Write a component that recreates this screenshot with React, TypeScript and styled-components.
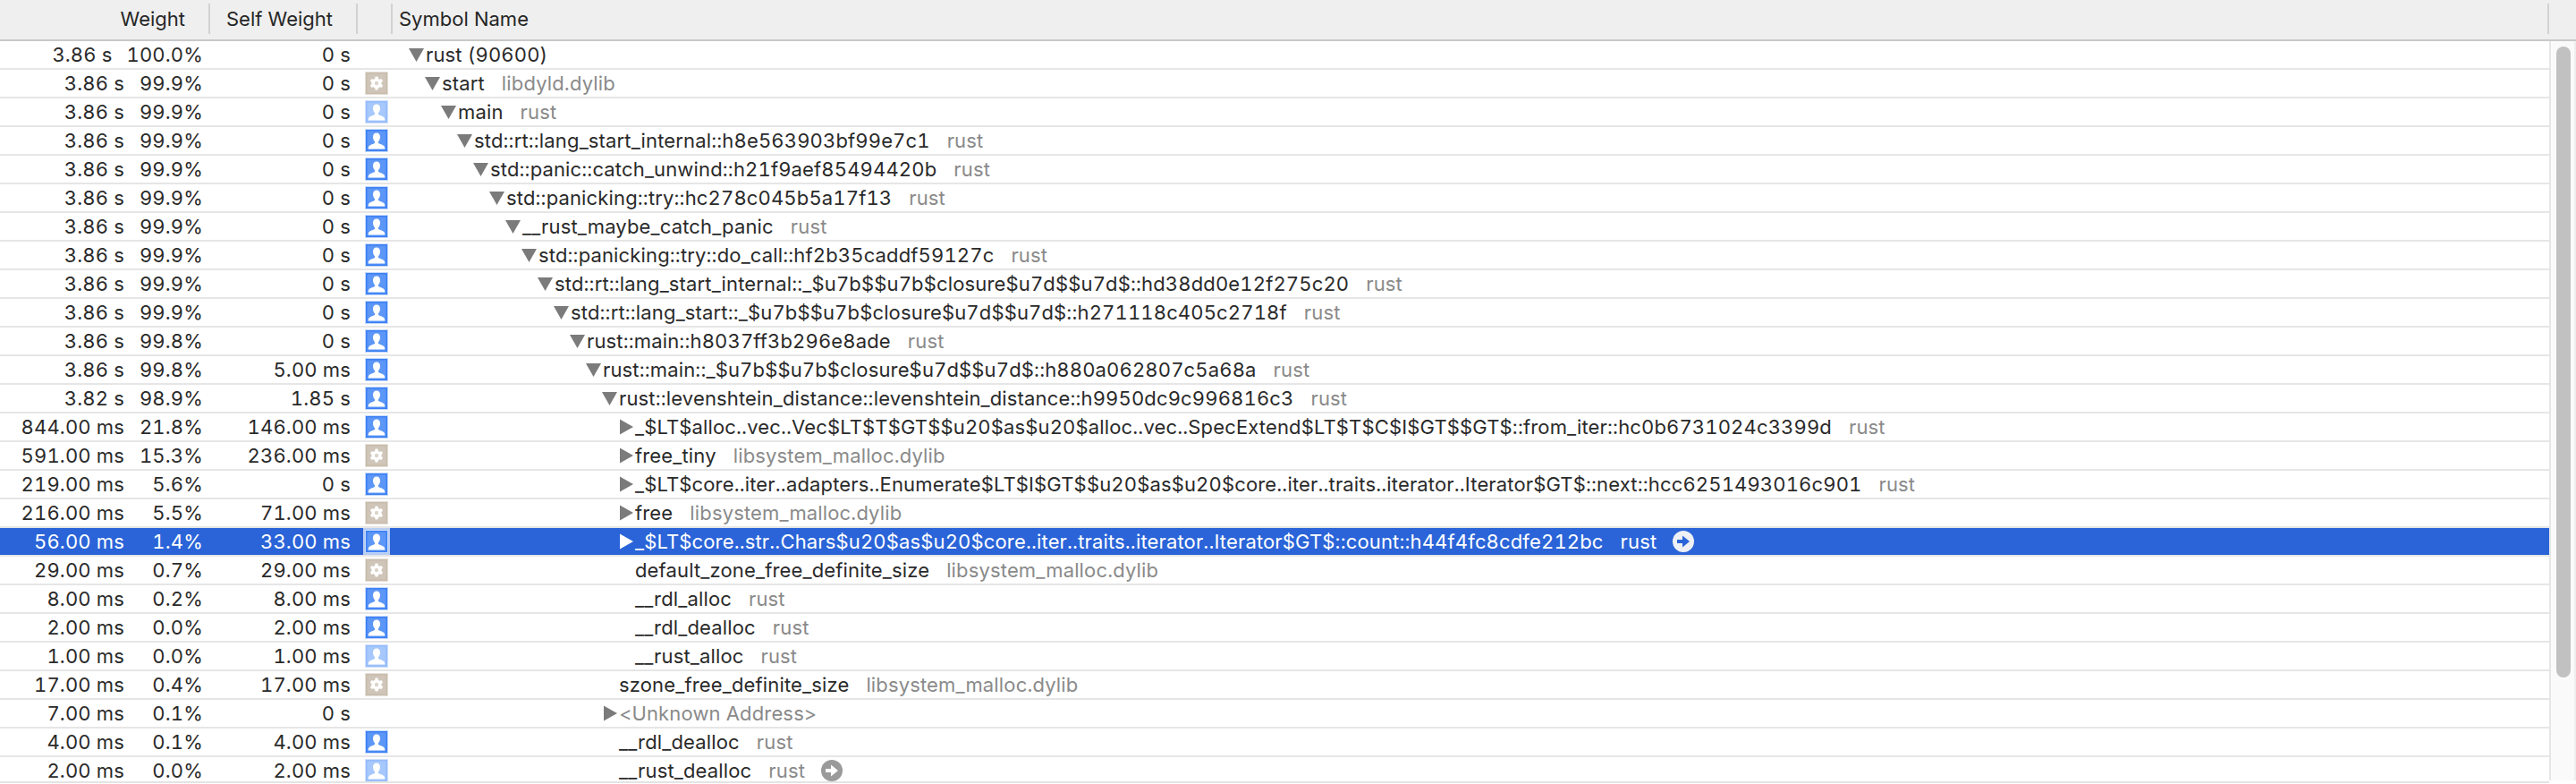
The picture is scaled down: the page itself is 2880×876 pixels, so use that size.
import React from 'react';
import styled, { createGlobalStyle } from 'styled-components';

type IconKind = 'user' | 'dim' | 'gear' | 'none';
type Arrow = 'down' | 'right' | 'none';

interface Sample {
  time: string;
  percent: string;
  self: string;
  icon: IconKind;
  depth: number;
  arrow: Arrow;
  name: string;
  lib?: string;
  selected?: boolean;
  jump?: boolean;
  unknown?: boolean;
}

const samples: Sample[] = [
  { time: '3.86 s', percent: '100.0%', self: '0 s', icon: 'none', depth: 0, arrow: 'down', name: 'rust (90600)' },
  { time: '3.86 s', percent: '99.9%', self: '0 s', icon: 'gear', depth: 1, arrow: 'down', name: 'start', lib: 'libdyld.dylib' },
  { time: '3.86 s', percent: '99.9%', self: '0 s', icon: 'dim', depth: 2, arrow: 'down', name: 'main', lib: 'rust' },
  { time: '3.86 s', percent: '99.9%', self: '0 s', icon: 'user', depth: 3, arrow: 'down', name: 'std::rt::lang_start_internal::h8e563903bf99e7c1', lib: 'rust' },
  { time: '3.86 s', percent: '99.9%', self: '0 s', icon: 'user', depth: 4, arrow: 'down', name: 'std::panic::catch_unwind::h21f9aef85494420b', lib: 'rust' },
  { time: '3.86 s', percent: '99.9%', self: '0 s', icon: 'user', depth: 5, arrow: 'down', name: 'std::panicking::try::hc278c045b5a17f13', lib: 'rust' },
  { time: '3.86 s', percent: '99.9%', self: '0 s', icon: 'user', depth: 6, arrow: 'down', name: '__rust_maybe_catch_panic', lib: 'rust' },
  { time: '3.86 s', percent: '99.9%', self: '0 s', icon: 'user', depth: 7, arrow: 'down', name: 'std::panicking::try::do_call::hf2b35caddf59127c', lib: 'rust' },
  { time: '3.86 s', percent: '99.9%', self: '0 s', icon: 'user', depth: 8, arrow: 'down', name: 'std::rt::lang_start_internal::_$u7b$$u7b$closure$u7d$$u7d$::hd38dd0e12f275c20', lib: 'rust' },
  { time: '3.86 s', percent: '99.9%', self: '0 s', icon: 'user', depth: 9, arrow: 'down', name: 'std::rt::lang_start::_$u7b$$u7b$closure$u7d$$u7d$::h271118c405c2718f', lib: 'rust' },
  { time: '3.86 s', percent: '99.8%', self: '0 s', icon: 'user', depth: 10, arrow: 'down', name: 'rust::main::h8037ff3b296e8ade', lib: 'rust' },
  { time: '3.86 s', percent: '99.8%', self: '5.00 ms', icon: 'user', depth: 11, arrow: 'down', name: 'rust::main::_$u7b$$u7b$closure$u7d$$u7d$::h880a062807c5a68a', lib: 'rust' },
  { time: '3.82 s', percent: '98.9%', self: '1.85 s', icon: 'user', depth: 12, arrow: 'down', name: 'rust::levenshtein_distance::levenshtein_distance::h9950dc9c996816c3', lib: 'rust' },
  { time: '844.00 ms', percent: '21.8%', self: '146.00 ms', icon: 'user', depth: 13, arrow: 'right', name: '_$LT$alloc..vec..Vec$LT$T$GT$$u20$as$u20$alloc..vec..SpecExtend$LT$T$C$I$GT$$GT$::from_iter::hc0b6731024c3399d', lib: 'rust' },
  { time: '591.00 ms', percent: '15.3%', self: '236.00 ms', icon: 'gear', depth: 13, arrow: 'right', name: 'free_tiny', lib: 'libsystem_malloc.dylib' },
  { time: '219.00 ms', percent: '5.6%', self: '0 s', icon: 'user', depth: 13, arrow: 'right', name: '_$LT$core..iter..adapters..Enumerate$LT$I$GT$$u20$as$u20$core..iter..traits..iterator..Iterator$GT$::next::hcc6251493016c901', lib: 'rust' },
  { time: '216.00 ms', percent: '5.5%', self: '71.00 ms', icon: 'gear', depth: 13, arrow: 'right', name: 'free', lib: 'libsystem_malloc.dylib' },
  { time: '56.00 ms', percent: '1.4%', self: '33.00 ms', icon: 'user', depth: 13, arrow: 'right', name: '_$LT$core..str..Chars$u20$as$u20$core..iter..traits..iterator..Iterator$GT$::count::h44f4fc8cdfe212bc', lib: 'rust', selected: true, jump: true },
  { time: '29.00 ms', percent: '0.7%', self: '29.00 ms', icon: 'gear', depth: 13, arrow: 'none', name: 'default_zone_free_definite_size', lib: 'libsystem_malloc.dylib' },
  { time: '8.00 ms', percent: '0.2%', self: '8.00 ms', icon: 'user', depth: 13, arrow: 'none', name: '__rdl_alloc', lib: 'rust' },
  { time: '2.00 ms', percent: '0.0%', self: '2.00 ms', icon: 'user', depth: 13, arrow: 'none', name: '__rdl_dealloc', lib: 'rust' },
  { time: '1.00 ms', percent: '0.0%', self: '1.00 ms', icon: 'dim', depth: 13, arrow: 'none', name: '__rust_alloc', lib: 'rust' },
  { time: '17.00 ms', percent: '0.4%', self: '17.00 ms', icon: 'gear', depth: 12, arrow: 'none', name: 'szone_free_definite_size', lib: 'libsystem_malloc.dylib' },
  { time: '7.00 ms', percent: '0.1%', self: '0 s', icon: 'none', depth: 12, arrow: 'right', name: '<Unknown Address>', unknown: true },
  { time: '4.00 ms', percent: '0.1%', self: '4.00 ms', icon: 'user', depth: 12, arrow: 'none', name: '__rdl_dealloc', lib: 'rust' },
  { time: '2.00 ms', percent: '0.0%', self: '2.00 ms', icon: 'dim', depth: 12, arrow: 'none', name: '__rust_dealloc', lib: 'rust', jump: true },
];

const GlobalStyle = createGlobalStyle`
  html, body {
    margin: 0;
    padding: 0;
    height: 876px;
    overflow: hidden;
    background: #ffffff;
  }
  body {
    font-family: Inter, "Liberation Sans", sans-serif;
    font-size: 22px;
    color: #2a2a2a;
  }
`;

const Window = styled.div`
  width: 2880px;
  height: 876px;
  display: flex;
  flex-direction: column;
  overflow: hidden;
`;

const Header = styled.div`
  height: 44px;
  flex: none;
  display: grid;
  grid-template-columns: 235px 165px 39px 1fr;
  align-items: center;
  background: #efefef;
  border-bottom: 2px solid #c9c9c9;
`;

const HeaderCell = styled.div<{ $align?: 'left' | 'right' }>`
  height: 34px;
  margin-bottom: 2px;
  display: flex;
  align-items: center;
  justify-content: ${({ $align }) => ($align === 'right' ? 'flex-end' : 'flex-start')};
  padding: 0 ${({ $align }) => ($align === 'right' ? '26px' : '0')} 0 ${({ $align }) => ($align === 'right' ? '0' : '7px')};
  border-right: 2px solid #d2d2d2;
  color: #262626;
`;

const HeaderLast = styled(HeaderCell)`
  margin-right: 30px;
`;

const Body = styled.div`
  flex: 1;
  display: flex;
  min-height: 0;
`;

const Table = styled.div`
  width: 2850px;
  flex: none;
  border-bottom: 2px solid #e4e4e4;
  height: 827px;
  overflow: hidden;
`;

const Row = styled.div<{ $selected?: boolean }>`
  height: 32px;
  box-sizing: border-box;
  display: grid;
  grid-template-columns: 235px 165px 39px 1fr;
  align-items: center;
  border-bottom: 2px solid #e6e6e6;
  background: ${({ $selected }) => ($selected ? '#2a64d8' : '#ffffff')};
  color: ${({ $selected }) => ($selected ? '#ffffff' : '#2a2a2a')};
  white-space: pre;
  letter-spacing: 0.15px;
  font-variant-numeric: tabular-nums;
`;

const WeightCell = styled.div`
  display: flex;
  justify-content: flex-end;
  gap: 16px;
  padding-right: 8px;
`;

const Percent = styled.span`
  min-width: 72px;
  text-align: right;
`;

const SelfCell = styled.div`
  text-align: right;
  padding-right: 8px;
`;

const IconCell = styled.div`
  padding-left: 8px;
  height: 26px;
  display: flex;
`;

const IconBox = styled.svg<{ $selected?: boolean }>`
  width: 26px;
  height: 26px;
  display: block;
  ${({ $selected }) => ($selected ? 'outline: 2px solid #b9cdf2;' : '')}
`;

const SymbolCell = styled.div<{ $depth: number }>`
  display: flex;
  align-items: center;
  padding-left: ${({ $depth }) => 18 + $depth * 18}px;
  min-width: 0;
`;

const Disclosure = styled.span`
  width: 19px;
  flex: none;
  height: 18px;
  display: flex;
  align-items: center;
`;

const Triangle = styled.svg<{ $selected?: boolean }>`
  width: 18px;
  height: 18px;
  display: block;
  fill: ${({ $selected }) => ($selected ? '#ffffff' : '#7b7b7b')};
`;

const SymbolName = styled.span<{ $unknown?: boolean }>`
  ${({ $unknown }) => ($unknown ? 'color: #8a8a8a;' : '')}
`;

const Library = styled.span<{ $selected?: boolean }>`
  margin-left: 19px;
  color: ${({ $selected }) => ($selected ? '#ffffff' : '#8a8a8a')};
`;

const JumpButton = styled.svg`
  width: 24px;
  height: 24px;
  margin-left: 18px;
  flex: none;
  display: block;
`;

const Scrollbar = styled.div`
  width: 30px;
  height: 826px;
  flex: none;
  padding: 6px 4px 0 6px;
  box-sizing: border-box;
  background: #fafafa;
  border-left: 2px solid #e6e6e6;
  border-right: 2px solid #eeeeee;
`;

const Thumb = styled.div`
  width: 16px;
  height: 705px;
  border-radius: 8px;
  background: #c1c1c1;
`;

const EntryIcon = ({ kind, selected }: { kind: IconKind; selected?: boolean }) => {
  if (kind === 'none') return null;
  if (kind === 'gear') {
    return (
      <IconBox viewBox="0 0 26 26">
        <rect width="26" height="26" fill="#e6e0d7" />
        <rect x="1" y="1" width="24" height="24" fill="#c8bcad" />
        <rect x="2.5" y="2.5" width="21" height="21" fill="#cfc5b8" />
        <g fill="#ffffff">
          <circle cx="13" cy="13" r="5.6" />
          <rect x="11.3" y="5.6" width="3.4" height="14.8" rx="1" />
          <rect x="11.3" y="5.6" width="3.4" height="14.8" rx="1" transform="rotate(60 13 13)" />
          <rect x="11.3" y="5.6" width="3.4" height="14.8" rx="1" transform="rotate(120 13 13)" />
        </g>
        <circle cx="13" cy="13" r="2.2" fill="#dcd4ca" />
      </IconBox>
    );
  }
  const dim = kind === 'dim';
  return (
    <IconBox viewBox="0 0 26 26" $selected={selected}>
      <rect width="26" height="26" fill={dim ? '#d2e2fc' : '#c4d9fb'} />
      <rect x="1" y="1" width="24" height="24" fill={dim ? '#94bbfb' : '#3c80f4'} />
      <rect x="2.5" y="2.5" width="21" height="21" fill={dim ? '#a6c8fc' : '#5c96f6'} />
      <path
        d="M13 4.5c-2.6 0-4 1.9-4 4.5 0 2.2.8 4.1 2 5.2v1.6c-.9 1.2-5.2 1.8-6.6 3.6-.6.8-.7 1.8-.7 3.1h18.6c0-1.3-.1-2.3-.7-3.1-1.4-1.8-5.7-2.4-6.6-3.6v-1.6c1.2-1.1 2-3 2-5.2 0-2.6-1.4-4.5-4-4.5z"
        fill="#ffffff"
      />
    </IconBox>
  );
};

const DisclosureIcon = ({ arrow, selected }: { arrow: Arrow; selected?: boolean }) => (
  <Disclosure>
    {arrow === 'down' && (
      <Triangle viewBox="0 0 18 18" $selected={selected}>
        <path d="M0 2h17L8.5 17z" />
      </Triangle>
    )}
    {arrow === 'right' && (
      <Triangle viewBox="0 0 18 18" $selected={selected}>
        <path d="M2 .5L17 9 2 17.5z" />
      </Triangle>
    )}
  </Disclosure>
);

const Jump = ({ selected }: { selected?: boolean }) => (
  <JumpButton viewBox="0 0 24 24">
    <circle cx="12" cy="12" r="12" fill={selected ? '#eef0f5' : '#9a9a9a'} />
    <path d="M5 10h6V5.5l8 6.5-8 6.5V14H5z" fill={selected ? '#2a64d8' : '#ffffff'} />
  </JumpButton>
);

const App = () => (
  <Window>
    <GlobalStyle />
    <Header>
      <HeaderCell $align="right">Weight</HeaderCell>
      <HeaderCell $align="right">Self Weight</HeaderCell>
      <HeaderCell />
      <HeaderLast>Symbol Name</HeaderLast>
    </Header>
    <Body>
      <Table>
        {samples.map((s, i) => (
          <Row key={i} $selected={s.selected}>
            <WeightCell>
              <span>{s.time}</span>
              <Percent>{s.percent}</Percent>
            </WeightCell>
            <SelfCell>{s.self}</SelfCell>
            <IconCell>
              <EntryIcon kind={s.icon} selected={s.selected} />
            </IconCell>
            <SymbolCell $depth={s.depth}>
              <DisclosureIcon arrow={s.arrow} selected={s.selected} />
              <SymbolName $unknown={s.unknown}>{s.name}</SymbolName>
              {s.lib && <Library $selected={s.selected}>{s.lib}</Library>}
              {s.jump && <Jump selected={s.selected} />}
            </SymbolCell>
          </Row>
        ))}
      </Table>
      <Scrollbar>
        <Thumb />
      </Scrollbar>
    </Body>
  </Window>
);

export default App;
